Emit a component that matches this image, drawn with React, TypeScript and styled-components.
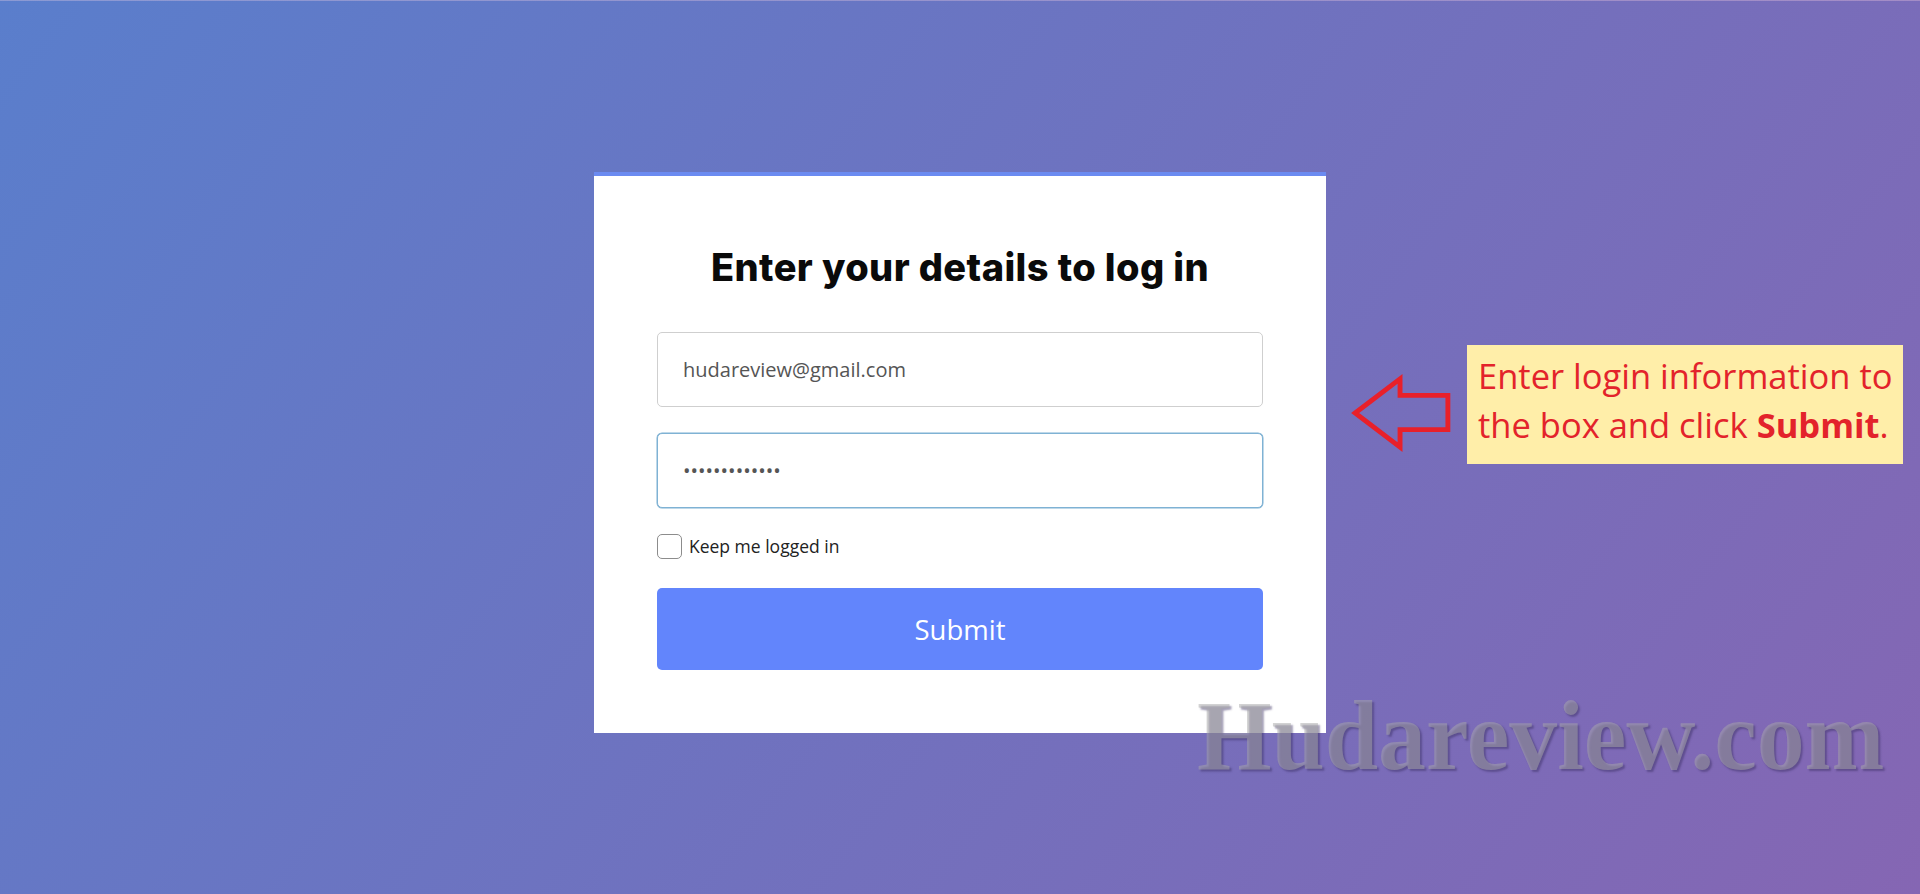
import React from "react";
import styled, { createGlobalStyle } from "styled-components";

const Global = createGlobalStyle`
  html, body { margin: 0; padding: 0; }
  body { font-family: "Open Sans", "Noto Sans", sans-serif; }
  * { box-sizing: border-box; }
`;

const Page = styled.main`
  position: relative;
  min-height: 894px;
  height: 894px;
  overflow: hidden;
  display: flex;
  justify-content: center;
  align-items: flex-start;
  padding-top: 171px;
  background: linear-gradient(127deg, #5a7ecc 0%, #6f72bf 50%, #8566b3 100%);
  border-top: 1px solid rgba(255, 255, 255, 0.25);
`;

const Card = styled.section`
  width: 732px;
  background: #ffffff;
  border-top: 4px solid #6b8bf1;
  padding: 68px 63px 63px;
  display: flex;
  flex-direction: column;
`;

const Title = styled.h1`
  margin: 0 0 42px;
  font-family: "Inter", "Noto Sans", sans-serif;
  font-weight: 800;
  font-size: 38px;
  line-height: 46px;
  color: #0a0a0a;
  text-align: center;
  letter-spacing: 0.4px;
`;

const Field = styled.input<{ $focused?: boolean }>`
  width: 100%;
  height: 75px;
  margin: 0 0 26px;
  padding: 0 25px;
  border: 1px solid ${(p) => (p.$focused ? "#7fb2d4" : "#cfcfcf")};
  box-shadow: ${(p) => (p.$focused ? "0 0 0 0.5px #7fb2d4" : "none")};
  border-radius: 5px;
  background: #ffffff;
  font-family: "Open Sans", sans-serif;
  font-size: 20px;
  color: #555555;
  outline: none;
`;

const CheckRow = styled.label`
  display: flex;
  align-items: center;
  gap: 7px;
  height: 24px;
  margin-bottom: 30px;
  font-family: "Open Sans", sans-serif;
  font-size: 17.5px;
  color: #222222;
`;

const Box = styled.input`
  appearance: none;
  margin: 0;
  width: 25px;
  height: 25px;
  border: 1.5px solid #8c8c8c;
  border-radius: 5px;
  background: #ffffff;
`;

const SubmitButton = styled.button`
  width: 100%;
  height: 82px;
  border: none;
  border-radius: 5px;
  background: #6285fc;
  color: #ffffff;
  font-family: "Open Sans", sans-serif;
  font-size: 27.5px;
  cursor: pointer;
`;

const Note = styled.div`
  position: absolute;
  left: 1467px;
  top: 344px;
  width: 436px;
  height: 119px;
  padding: 6px 0 0 11px;
  background: #ffeea9;
  color: #e3232b;
  font-family: "Open Sans", "Noto Sans", sans-serif;
  font-size: 34.5px;
  line-height: 49px;
  white-space: nowrap;
  strong { font-weight: 700; }
`;

const Arrow = styled.svg`
  position: absolute;
  left: 1348px;
  top: 371px;
`;

const Watermark = styled.div`
  position: absolute;
  left: 1197px;
  top: 686px;
  font-family: "Liberation Serif", "Times New Roman", serif;
  font-weight: 700;
  font-size: 100px;
  line-height: 97px;
  color: rgba(170, 170, 170, 0.5);
  text-shadow: 2px 2px 2px rgba(55, 45, 95, 0.45);
  white-space: nowrap;
  transform: scaleX(0.958);
  transform-origin: left top;
  pointer-events: none;
`;

export default function App() {
  return (
    <>
      <Global />
      <Page>
        <Card>
          <Title>Enter your details to log in</Title>
          <Field type="email" readOnly defaultValue="hudareview@gmail.com" />
          <Field $focused type="password" readOnly defaultValue="hudareview123" />
          <CheckRow>
            <Box type="checkbox" />
            Keep me logged in
          </CheckRow>
          <SubmitButton type="button">Submit</SubmitButton>
        </Card>
        <Arrow width="108" height="82" viewBox="0 0 110 84">
          <path
            d="M7 42 L53 7 L53 24 L102 24 L102 59 L53 59 L53 77 Z"
            fill="none"
            stroke="#e8202a"
            strokeWidth="5"
            strokeLinejoin="miter"
          />
        </Arrow>
        <Note>
          Enter login information to
          <br />
          the box and click <strong>Submit</strong>.
        </Note>
        <Watermark>Hudareview.com</Watermark>
      </Page>
    </>
  );
}
